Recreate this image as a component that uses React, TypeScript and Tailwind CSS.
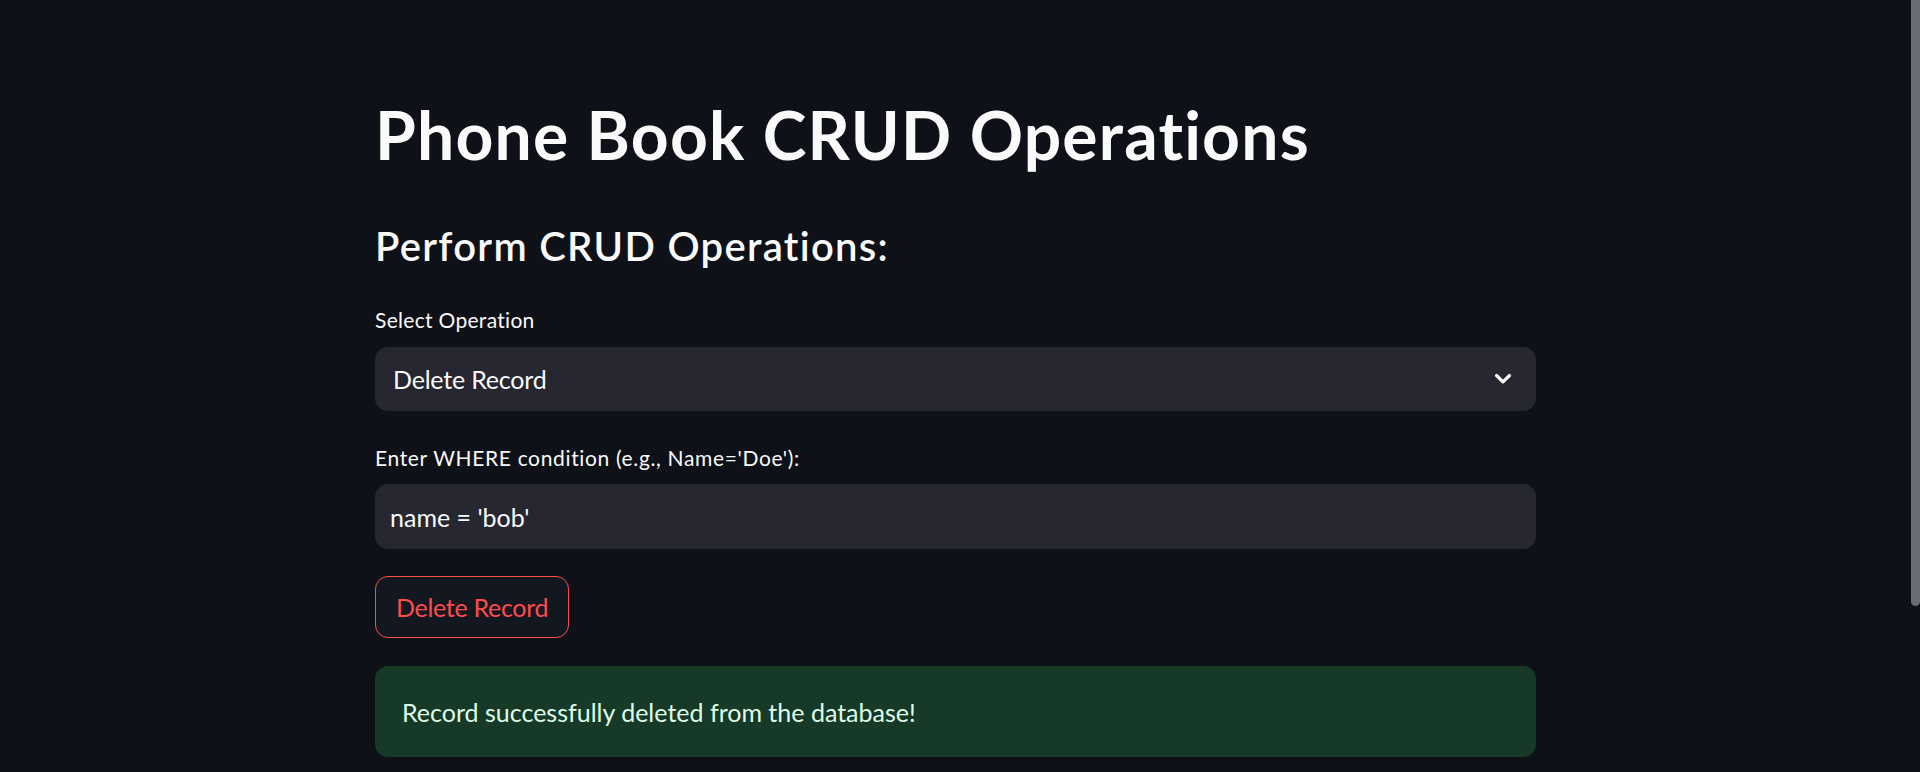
import React from "react";

function Chevron() {
  return (
    <svg width="18" height="12" viewBox="0 0 18 12" fill="none">
      <path d="M2.5 2.5 L9 8.8 L15.5 2.5" stroke="#fafafa" strokeWidth="3.2" strokeLinecap="round" strokeLinejoin="round" />
    </svg>
  );
}

export default function App() {
  return (
    <div className="h-[772px] w-[1920px] overflow-hidden bg-[#0e1117] flex font-['Lato',sans-serif] text-[#fafafa]">
      <div className="flex-1 flex justify-center">
        <div className="w-[1161px] pt-[96px] flex flex-col">
          <h1 className="text-[66px] leading-[1.2] font-bold h-[78px] tracking-[1.2px] -mt-[1px]">Phone Book CRUD Operations</h1>
          <h2 className="mt-[49px] text-[40px] leading-[1.2] font-semibold h-[48px] tracking-[1.3px]">Perform CRUD Operations:</h2>
          <div className="mt-[37px] text-[21px] leading-[1.2] h-[25px] tracking-[0.3px]">Select Operation</div>
          <div className="mt-[15px] h-[64px] rounded-[13px] bg-[#262730] flex items-center justify-between pl-[18px] pr-[24px]">
            <span className="text-[25px] leading-[1.2] tracking-[-0.2px]">Delete Record</span>
            <Chevron />
          </div>
          <div className="mt-[34px] text-[21px] leading-[1.2] h-[25px] tracking-[0.65px]">Enter WHERE condition (e.g., Name='Doe'):</div>
          <div className="mt-[14px] h-[65px] rounded-[13px] bg-[#262730] flex items-center pl-[15px]">
            <span className="text-[25px] leading-[1.2]">name = 'bob'</span>
          </div>
          <div className="mt-[27px]">
            <button className="h-[62px] px-[20px] rounded-[13px] border border-[#ff4b4b] bg-[#131720] text-[#ff4b4b] text-[25px] leading-[1.2] tracking-[-0.3px]">
              Delete Record
            </button>
          </div>
          <div className="mt-[28px] h-[91px] rounded-[13px] bg-[#173928] flex items-center pl-[27px] text-[#dffde9] text-[25px] leading-[1.2]">
            Record successfully deleted from the database!
          </div>
        </div>
      </div>
      <div className="w-[9px] flex flex-col">
        <div className="h-[606px] w-full bg-[#6b6d72] rounded-b-full" />
      </div>
    </div>
  );
}
